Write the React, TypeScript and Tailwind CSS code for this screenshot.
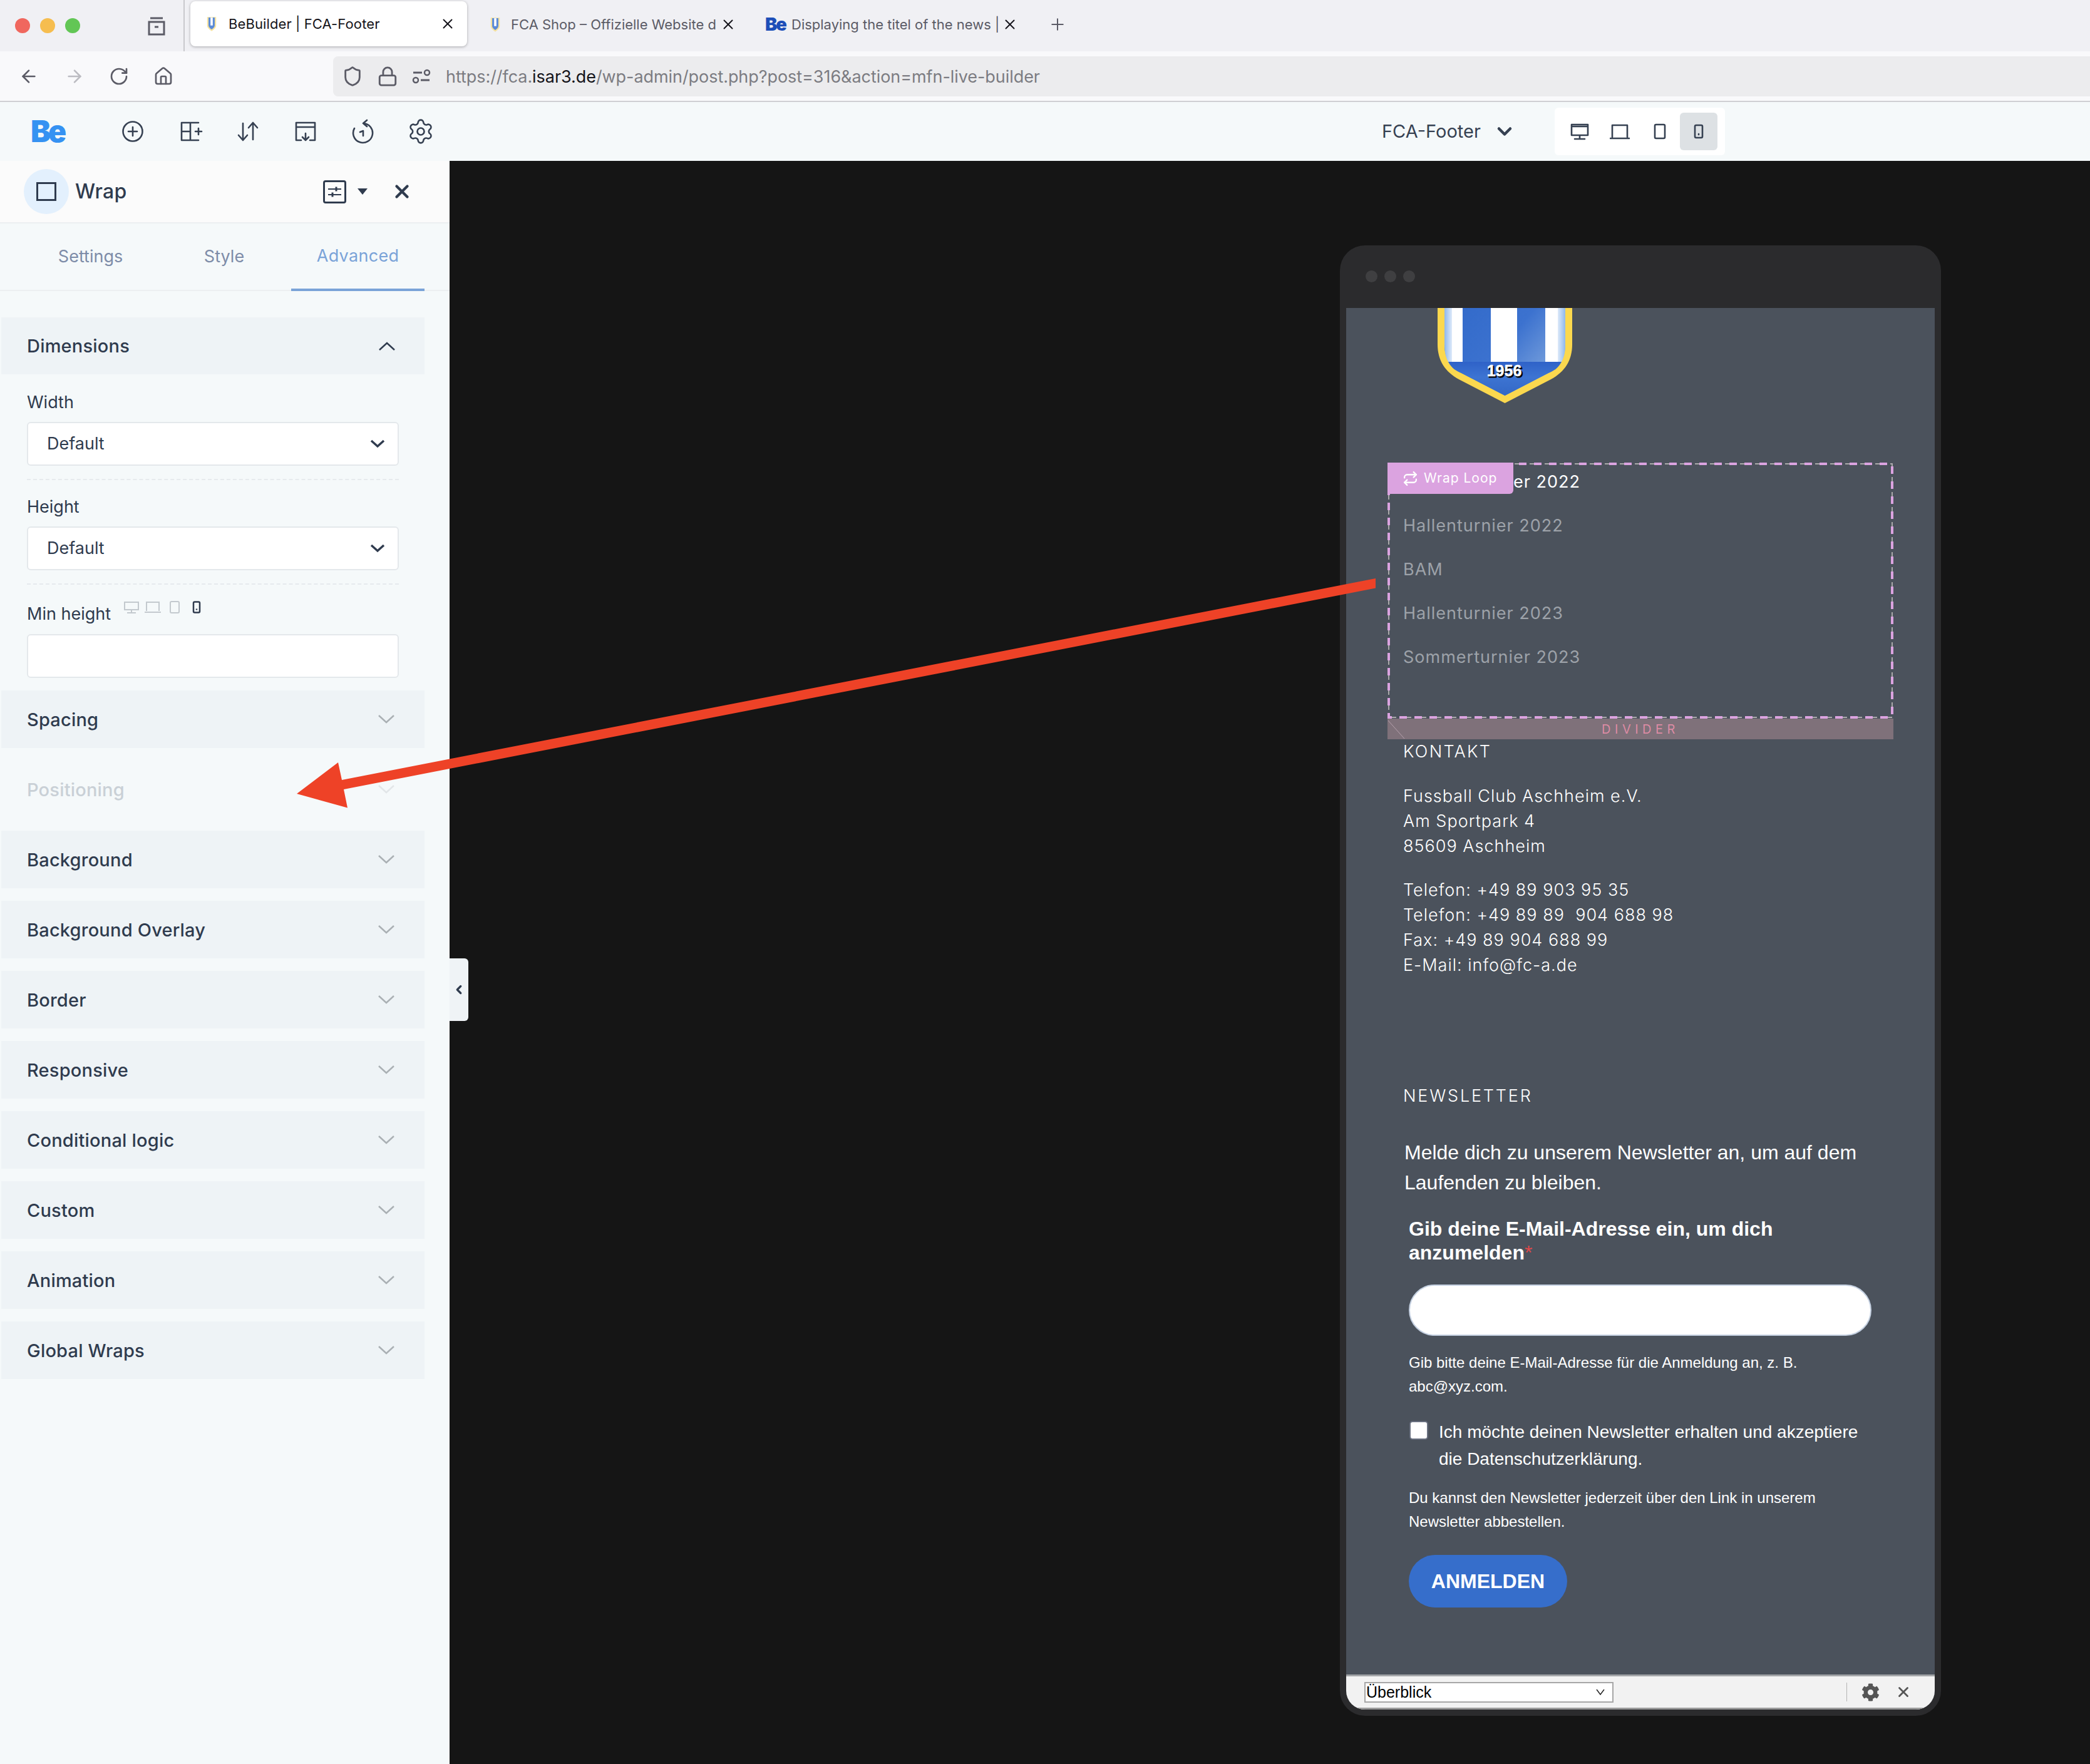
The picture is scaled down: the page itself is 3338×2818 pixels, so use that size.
import React from "react";
import { Settings, Repeat, RotateCw, House, Shield, Lock, ChevronDown, ChevronLeft, X, Plus, ArrowLeft, ArrowRight } from "lucide-react";
import { FaCog } from "react-icons/fa";

const Favicon = () => (
  <svg width="18" height="30" viewBox="0 0 20 30" className="shrink-0">
    <path d="M2 3h16v15c0 4-4 7-8 10-4-3-8-6-8-10z" fill="#f5e2a0" />
    <path d="M4.500 4h11v14c0 3-3 5-5.500 7-2.500-2-5.500-4-5.500-7z" fill="#5b8bd8" />
    <rect x="8" y="4" width="4" height="14" fill="#fff" />
  </svg>
);

const Crest = () => (
  <svg width="216" height="152" viewBox="0 0 216 152" className="block">
    <defs>
      <linearGradient id="crestBlue" x1="0" y1="0" x2="1" y2="0.6">
        <stop offset="0" stopColor="#3169c9" />
        <stop offset="0.55" stopColor="#3c72cf" />
        <stop offset="1" stopColor="#7fa6de" />
      </linearGradient>
      <linearGradient id="crestBottom" x1="0" y1="0" x2="0" y2="1">
        <stop offset="0" stopColor="#2f62c8" />
        <stop offset="0.45" stopColor="#3d74d2" />
        <stop offset="1" stopColor="#3368c6" />
      </linearGradient>
      <linearGradient id="stripeL" x1="0" y1="0" x2="1" y2="0">
        <stop offset="0" stopColor="#8fb8ec" />
        <stop offset="1" stopColor="#ffffff" />
      </linearGradient>
      <linearGradient id="stripeR" x1="1" y1="0" x2="0" y2="0">
        <stop offset="0" stopColor="#8fb8ec" />
        <stop offset="1" stopColor="#ffffff" />
      </linearGradient>
    </defs>
    <path d="M0 0V58C0 84 12 102 34 114L107.500 152L181 114C203 102 215 84 215 58V0Z" fill="#fbd84e" />
    <path d="M11 0V58C11 80 20 94 38 104L107.500 140L177 104C195 94 204 80 204 58V0Z" fill="url(#crestBlue)" />
    <path d="M17 86C22 96 30 101 38 104L107.500 140L177 104C185 101 193 96 198 86Z" fill="url(#crestBottom)" />
    <path d="M11 0V58C11 70 13 79 17 86H28V0Z" fill="url(#stripeL)" />
    <path d="M204 0V58C204 70 202 79 198 86H187V0Z" fill="url(#stripeR)" />
    <rect x="23" y="0" width="17" height="86" fill="#fff" />
    <rect x="85" y="0" width="42" height="86" fill="#fff" />
    <rect x="172" y="0" width="20" height="86" fill="#fff" />
    <text x="108.500" y="111" textAnchor="middle" fontFamily="'Liberation Sans', sans-serif" fontWeight="700" fontSize="25" fill="#000" stroke="#000" strokeWidth="1">1956</text>
    <text x="106.500" y="109" textAnchor="middle" fontFamily="'Liberation Sans', sans-serif" fontWeight="700" fontSize="25" fill="#fff" stroke="#fff" strokeWidth="0.5">1956</text>
  </svg>
);

const ToolIcon = ({ children }: { children: React.ReactNode }) => (
  <div className="w-[92px] flex items-center justify-center">{children}</div>
);

const S = { fill: "none", stroke: "#364152", strokeWidth: 2.6, strokeLinecap: "round" as const, strokeLinejoin: "round" as const };

const Row = ({ label, faded }: { label: string; faded?: boolean }) => (
  <div className={faded ? "h-[92px] mt-[20px] w-[676px] bg-[#f5f9fa] flex items-center justify-between pl-[41px] pr-[47px] text-[#c9d0d6]" : "h-[92px] mt-[20px] w-[676px] bg-[#eef3f6] flex items-center justify-between pl-[41px] pr-[47px] text-[#2f3b4e]"}>
    <span className="text-[29px] font-medium tracking-[0.2px] pt-[2px]">{label}</span>
    <svg width="28" height="16" viewBox="0 0 28 16"><path d="M2 2l12 11L26 2" fill="none" stroke={faded ? "#e2e6e8" : "#aab0b4"} strokeWidth="2.500" /></svg>
  </div>
);

const SelectBox = () => (
  <div className="h-[70px] w-[594px] ml-[41px] bg-white border-2 border-[#e4e8eb] rounded-[6px] flex items-center justify-between pl-[30px] pr-[20px] text-[27px] text-[#2f3b4e]">
    <span>Default</span>
    <svg width="24" height="14" viewBox="0 0 24 14"><path d="M2 2l10 9L22 2" fill="none" stroke="#2f3b4e" strokeWidth="3.500" /></svg>
  </div>
);

export default function App() {
  return (
    <div className="relative w-[3338px] h-[2818px] overflow-hidden bg-[#151515] font-['Inter',sans-serif]">
      {/* tab strip */}
      <div className="h-[82px] bg-[#f0f0f4] flex items-start text-[22px]">
        <div className="w-[295px] h-[82px] flex items-center border-r-2 border-[#c9c9cd] shrink-0">
          <div className="ml-[24px] w-[24px] h-[24px] rounded-full bg-[#f0675e]" />
          <div className="ml-[16px] w-[24px] h-[24px] rounded-full bg-[#f6bd4f]" />
          <div className="ml-[16px] w-[24px] h-[24px] rounded-full bg-[#62c655]" />
          <svg className="ml-[105px]" width="34" height="32" viewBox="0 0 34 32"><path d="M7 4h20M5 10h24v20H5zM14 18h6" fill="none" stroke="#5b5b66" strokeWidth="3" /></svg>
        </div>
        <div className="ml-[9px] mt-[2px] w-[442px] h-[72px] bg-white rounded-[8px] shadow-[0_1px_4px_rgba(0,0,0,0.3)] flex items-center pl-[25px] pr-[18px] text-[#15141a]">
          <Favicon />
          <span className="ml-[18px] tracking-[0.1px] pt-[1px]">BeBuilder | FCA-Footer</span>
          <X className="ml-auto" size={26} strokeWidth={1.8} />
        </div>
        <div className="ml-[36px] h-[78px] w-[404px] flex items-center text-[#5b5b66]">
          <Favicon />
          <span className="ml-[16px] w-[334px] overflow-hidden whitespace-nowrap">FCA Shop – Offizielle Website d</span>
          <X className="text-[#15141a]" size={26} strokeWidth={1.8} />
        </div>
        <div className="ml-[36px] h-[78px] flex items-center text-[#5b5b66]">
          <span className="w-[34px] text-[29px] font-black text-[#1d4eb8] tracking-[-2px]">Be</span>
          <span className="ml-[8px] w-[330px] overflow-hidden whitespace-nowrap">Displaying the titel of the news |</span>
          <X className="ml-[6px] text-[#15141a]" size={26} strokeWidth={1.8} />
          <Plus className="ml-[48px]" size={30} strokeWidth={1.6} />
        </div>
      </div>
      {/* nav bar */}
      <div className="h-[81px] bg-[#f9f9fb] border-b-2 border-[#cfcfd3] flex items-center text-[#5b5b66]">
        <ArrowLeft className="ml-[30px]" size={32} strokeWidth={2} />
        <ArrowRight className="ml-[41px] text-[#bcbcc2]" size={32} strokeWidth={2} />
        <RotateCw className="ml-[39px]" size={32} strokeWidth={2} />
        <House className="ml-[39px]" size={32} strokeWidth={2} />
        <div className="ml-[255px] flex-1 h-[64px] bg-[#ececee] rounded-l-[8px] flex items-center pl-[14px] mt-[1px]">
          <Shield size={34} strokeWidth={2} />
          <Lock className="ml-[22px]" size={34} strokeWidth={2} />
          <svg className="ml-[20px]" width="34" height="30" viewBox="0 0 34 30"><path d="M4 9h14M16 21h14" stroke="#5b5b66" strokeWidth="3" /><circle cx="26" cy="9" r="4" fill="none" stroke="#5b5b66" strokeWidth="2.500" /><circle cx="8" cy="21" r="4" fill="none" stroke="#5b5b66" strokeWidth="2.500" /></svg>
          <span className="ml-[22px] pt-[2px] text-[27px] tracking-[-0.06px] text-[#7c7c82]">https://fca.<span className="text-[#15141a]">isar3.de</span>/wp-admin/post.php?post=316&amp;action=mfn-live-builder</span>
        </div>
      </div>
      {/* builder toolbar */}
      <div className="h-[94px] bg-[#f5f9fa] flex items-center">
        <span className="ml-[49px] w-[117px] text-[48px] font-black text-[#3592f2] tracking-[-4px] leading-none">Be</span>
        <ToolIcon><svg width="36" height="36" viewBox="0 0 36 36" {...S}><circle cx="18" cy="18" r="15.500" /><path d="M18 11v14M11 18h14" /></svg></ToolIcon>
        <ToolIcon><svg className="ml-[3px]" width="38" height="34" viewBox="0 0 38 34" {...S}><path d="M30 3H3v28h27M3 17h14M17 3v28M25 17h10M30 12v10" /></svg></ToolIcon>
        <ToolIcon><svg width="34" height="34" viewBox="0 0 34 34" {...S}><path d="M9 4v26M2 23l7 8 7-8M25 30V4M18 11l7-8 7 8" /></svg></ToolIcon>
        <ToolIcon><svg width="34" height="34" viewBox="0 0 34 34" {...S}><path d="M10 31H2V3h30v28h-8M2 10h30M17 20v11M12 26l5 5 5-5" /></svg></ToolIcon>
        <ToolIcon><svg width="36" height="40" viewBox="0 0 36 40" {...S}><path d="M18 7a15.500 15.500 0 1 1-14 8M18 7l6-5M18 7l6 5M13 21l5-2v8" /></svg></ToolIcon>
        <ToolIcon><Settings size={44} strokeWidth={1.45} color="#364152" /></ToolIcon>
        <span className="ml-[1489px] text-[29px] text-[#364152]">FCA-Footer</span>
        <ChevronDown className="ml-[20px]" size={36} strokeWidth={3} color="#364152" />
        <div className="ml-[62px] w-[272px] h-[76px] bg-white rounded-[6px] flex items-center pl-[8px] mt-[-1px]">
          <div className="w-[64px] flex justify-center"><svg width="32" height="28" viewBox="0 0 32 28" {...S}><path d="M3 3h26v17H3zM3 6h26M16 20v6M8 26h16" /></svg></div>
          <div className="w-[64px] flex justify-center"><svg width="32" height="26" viewBox="0 0 32 26" {...S}><path d="M4 22V3h24v19M1 24h30" /></svg></div>
          <div className="w-[64px] flex justify-center"><svg width="20" height="26" viewBox="0 0 20 26" {...S}><rect x="2" y="2" width="16" height="22" rx="2" /></svg></div>
          <div className="w-[60px] h-[60px] bg-[#dde1e4] rounded-[6px] flex items-center justify-center"><svg width="16" height="24" viewBox="0 0 16 24" {...S}><rect x="2" y="2" width="12" height="20" rx="2" /><path d="M8 16v1" /></svg></div>
        </div>
      </div>
      {/* body */}
      <div className="flex h-[2561px]">
        <aside className="relative w-[718px] bg-[#f5f9fa] shrink-0">
          <div className="h-[100px] bg-[#fbfbfb] border-b-2 border-[#eceff1] flex items-center">
            <div className="ml-[38px] w-[72px] h-[72px] rounded-full bg-[#e3f0fd] flex items-center justify-center">
              <div className="w-[32px] h-[30px] border-[3px] border-[#2f3b4e]" />
            </div>
            <span className="ml-[10px] w-[90px] text-[32px] font-medium text-[#2f3b4e] tracking-[0.4px]">Wrap</span>
            <div className="ml-[306px] w-[37px] h-[37px] rounded-[4px] border-[3px] border-[#2f3b4e] flex items-center justify-center">
              <svg width="25" height="23" viewBox="0 0 25 23"><path d="M2 7h21M2 16h21" stroke="#2f3b4e" strokeWidth="2" /><path d="M15 3.500v7M9 12.500v7" stroke="#2f3b4e" strokeWidth="3" /></svg>
            </div>
            <svg className="ml-[18px]" width="16" height="10" viewBox="0 0 16 10"><path d="M0 0h16L8 10z" fill="#2f3b4e" /></svg>
            <X className="ml-[38px]" size={34} strokeWidth={3} color="#2f3b4e" />
          </div>
          <div className="h-[108px] border-b-2 border-[#eceff1] flex pl-[38px] text-[27px] text-[#7d8ca8]">
            <div className="w-[213px] flex items-center justify-center">Settings</div>
            <div className="w-[214px] flex items-center justify-center">Style</div>
            <div className="w-[213px] h-[108px] flex items-center justify-center border-b-4 border-[#7aa3d8] text-[#7aa3d8] tracking-[0.3px]">Advanced</div>
          </div>
          <div className="pl-[2px] pt-[42px]">
            <div className="h-[91px] w-[676px] bg-[#eef3f6] flex items-center justify-between pl-[41px] pr-[46px] text-[#2f3b4e]">
              <span className="text-[29px] font-medium tracking-[0.2px]">Dimensions</span>
              <svg width="28" height="16" viewBox="0 0 28 16"><path d="M2 14L14 3l12 11" fill="none" stroke="#2f3b4e" strokeWidth="2.500" /></svg>
            </div>
            <div className="text-[27px] text-[#2f3b4e]">
              <div className="ml-[41px] mt-[24px] h-[40px] leading-[40px] pt-[1px]">Width</div>
              <div className="mt-[12px]"><SelectBox /></div>
              <div className="ml-[41px] w-[594px] mt-[21px] border-t-2 border-dashed border-[#e6eaed]" />
              <div className="ml-[41px] mt-[22px] h-[40px] leading-[40px] pt-[1px]">Height</div>
              <div className="mt-[12px]"><SelectBox /></div>
              <div className="ml-[41px] w-[594px] mt-[21px] border-t-2 border-dashed border-[#e6eaed]" />
              <div className="ml-[41px] mt-[27px] h-[40px] flex items-center">
                <span className="leading-[40px]">Min height</span>
                <div className="ml-[20px] mt-[-22px] flex items-center">
                  <svg width="26" height="21" viewBox="0 0 26 21" fill="none" stroke="#c3c9ce" strokeWidth="2"><path d="M2 2h22v12H2zM13 14v4M6 19h14" /></svg>
                  <svg className="ml-[8px]" width="26" height="20" viewBox="0 0 26 20" fill="none" stroke="#c3c9ce" strokeWidth="2"><path d="M3 16V2h20v14M0 18h26" /></svg>
                  <svg className="ml-[13px]" width="18" height="20" viewBox="0 0 18 20" fill="none" stroke="#c3c9ce" strokeWidth="2"><rect x="2" y="1" width="14" height="18" rx="2" /></svg>
                  <svg className="ml-[19px]" width="14" height="20" viewBox="0 0 14 20" fill="none" stroke="#2f3b4e" strokeWidth="2.500"><rect x="2" y="1.500" width="10" height="17" rx="2" /><path d="M7 12.500v2" /></svg>
                </div>
              </div>
              <div className="ml-[41px] mt-[12px] mb-[1px] h-[70px] w-[594px] bg-white border-2 border-[#e4e8eb] rounded-[6px]" />
            </div>
            <Row label="Spacing" />
            <Row label="Positioning" faded />
            <Row label="Background" />
            <Row label="Background Overlay" />
            <Row label="Border" />
            <Row label="Responsive" />
            <Row label="Conditional logic" />
            <Row label="Custom" />
            <Row label="Animation" />
            <Row label="Global Wraps" />
          </div>
          <div className="absolute left-[718px] top-[1274px] w-[30px] h-[100px] bg-[#eff3f6] rounded-r-[6px] flex items-center justify-center">
            <ChevronLeft size={22} strokeWidth={3.5} color="#2f3b4e" />
          </div>
        </aside>
        <main className="flex-1 pl-[1422px] pt-[135px]">
          <div className="w-[960px] h-[2349px] bg-[#2b2b2d] rounded-[40px] px-[10px] pb-[10px] flex flex-col">
            <div className="h-[100px] shrink-0 flex items-center pl-[31px] gap-[11px] pb-[2px]">
              <div className="w-[19px] h-[19px] rounded-full bg-[#3f3f41]" />
              <div className="w-[19px] h-[19px] rounded-full bg-[#3f3f41]" />
              <div className="w-[19px] h-[19px] rounded-full bg-[#3f3f41]" />
            </div>
            <div className="flex-1 bg-[#4b525c] rounded-b-[30px] overflow-hidden flex flex-col text-white">
              <div className="ml-[146px]"><Crest /></div>
              <div className="relative ml-[66px] mt-[95px] w-[808px] h-[409px] pl-[25px] pt-[11px] flex flex-col gap-[30px] text-[27px] leading-[40px] tracking-[1px] text-[#9da2a9] font-normal">
                <div className="text-white">Sommerturnier 2022</div>
                <div>Hallenturnier 2022</div>
                <div>BAM</div>
                <div>Hallenturnier 2023</div>
                <div>Sommerturnier 2023</div>
                <svg className="absolute left-0 top-0" width="808" height="409" viewBox="0 0 808 409" fill="none">
                  <rect x="2" y="2" width="804" height="405" stroke="#aaaaaa" strokeWidth="2" strokeDasharray="14 10" strokeDashoffset="15" />
                  <rect x="2" y="2" width="804" height="405" stroke="#dba3e0" strokeWidth="4" strokeDasharray="12 12" strokeDashoffset="8" />
                </svg>
                <div className="absolute left-0 top-0 w-[201px] h-[50px] bg-[#dba3e0] rounded-br-[6px] flex items-center pl-[24px] text-white text-[21px] tracking-[1px]">
                  <Repeat size={25} strokeWidth={2.2} />
                  <span className="ml-[9px]">Wrap Loop</span>
                </div>
              </div>
              <div className="relative ml-[66px] w-[808px] h-[33px] bg-[#7f717a] flex items-center justify-center text-[20px] tracking-[6.5px] text-[#dc8ba4]">
                DIVIDER
                <svg className="absolute left-0 top-0" width="28" height="33" viewBox="0 0 28 33"><path d="M1 3l26 29" stroke="#b5a0ad" strokeWidth="1" /></svg>
              </div>
              <div className="ml-[91px] text-[27px] leading-[40px] tracking-[1px] font-light">
                <div className="tracking-[2.300px]">KONTAKT</div>
                <div className="mt-[31px]">Fussball Club Aschheim e.V.</div>
                <div>Am Sportpark 4</div>
                <div>85609 Aschheim</div>
                <div className="mt-[30px]">Telefon: +49 89 903 95 35</div>
                <div>Telefon: +49 89 89&nbsp; 904 688 98</div>
                <div>Fax: +49 89 904 688 99</div>
                <div>E-Mail: info@fc-a.de</div>
                <div className="mt-[169px] tracking-[2.800px]">NEWSLETTER</div>
              </div>
              <div className="ml-[93px] mt-[46px] w-[740px] text-[32px] leading-[48px] font-['Liberation_Sans',sans-serif]">Melde dich zu unserem Newsletter an, um auf dem Laufenden zu bleiben.</div>
              <div className="ml-[100px] font-['Liberation_Sans',sans-serif]">
                <div className="mt-[31px] w-[700px] text-[32px] leading-[38px] font-bold">Gib deine E-Mail-Adresse ein, um dich anzumelden<span className="text-[#e0484a] font-normal">*</span></div>
                <div className="mt-[32px] w-[739px] h-[82px] bg-white rounded-full border-2 border-[#c3cfe0]" />
                <div className="mt-[24px] w-[660px] text-[24px] leading-[38px]">Gib bitte deine E-Mail-Adresse für die Anmeldung an, z. B. abc@xyz.com.</div>
                <div className="mt-[32px] flex">
                  <div className="ml-[1px] mt-[4px] w-[30px] h-[30px] bg-white rounded-[5px] border-2 border-[#697080] shrink-0" />
                  <div className="ml-[17px] w-[700px] text-[28px] leading-[43px]">Ich möchte deinen Newsletter erhalten und akzeptiere die Datenschutzerklärung.</div>
                </div>
                <div className="mt-[22px] w-[680px] text-[24px] leading-[38px]">Du kannst den Newsletter jederzeit über den Link in unserem Newsletter abbestellen.</div>
                <div className="mt-[34px] w-[253px] h-[84px] rounded-full bg-[#366ecb] flex items-center justify-center text-[32px] font-bold">ANMELDEN</div>
              </div>
              <div className="mt-auto h-[56px] bg-[#f2f2f2] border-t-[3px] border-b-[3px] border-t-[#a3a5a8] border-b-[#9a9a9a] flex items-center font-['Liberation_Sans',sans-serif] text-black text-[25px]">
                <div className="ml-[29px] w-[398px] h-[33px] bg-white border-2 border-[#a6a6a6] flex items-center justify-between pl-[1px] pr-[12px] leading-none">
                  <span>Überblick</span>
                  <svg width="14" height="10" viewBox="0 0 14 10"><path d="M1 1l6 8 6-8" fill="none" stroke="#222" strokeWidth="1.500" /></svg>
                </div>
                <div className="ml-[372px] w-[1px] h-[30px] bg-[#b5b5b5]" />
                <FaCog className="ml-[23px]" size={29} color="#555" />
                <X className="ml-[25px]" size={26} strokeWidth={2.6} color="#555" />
              </div>
            </div>
          </div>
        </main>
      </div>
      {/* annotation arrow */}
      <svg className="absolute left-0 top-0 pointer-events-none" width="3338" height="2818" viewBox="0 0 3338 2818">
        <polygon points="474,1268 540,1218 546,1246 2197,924 2197,939.500 549,1261 555,1290.500" fill="#ee4227" />
      </svg>
    </div>
  );
}
